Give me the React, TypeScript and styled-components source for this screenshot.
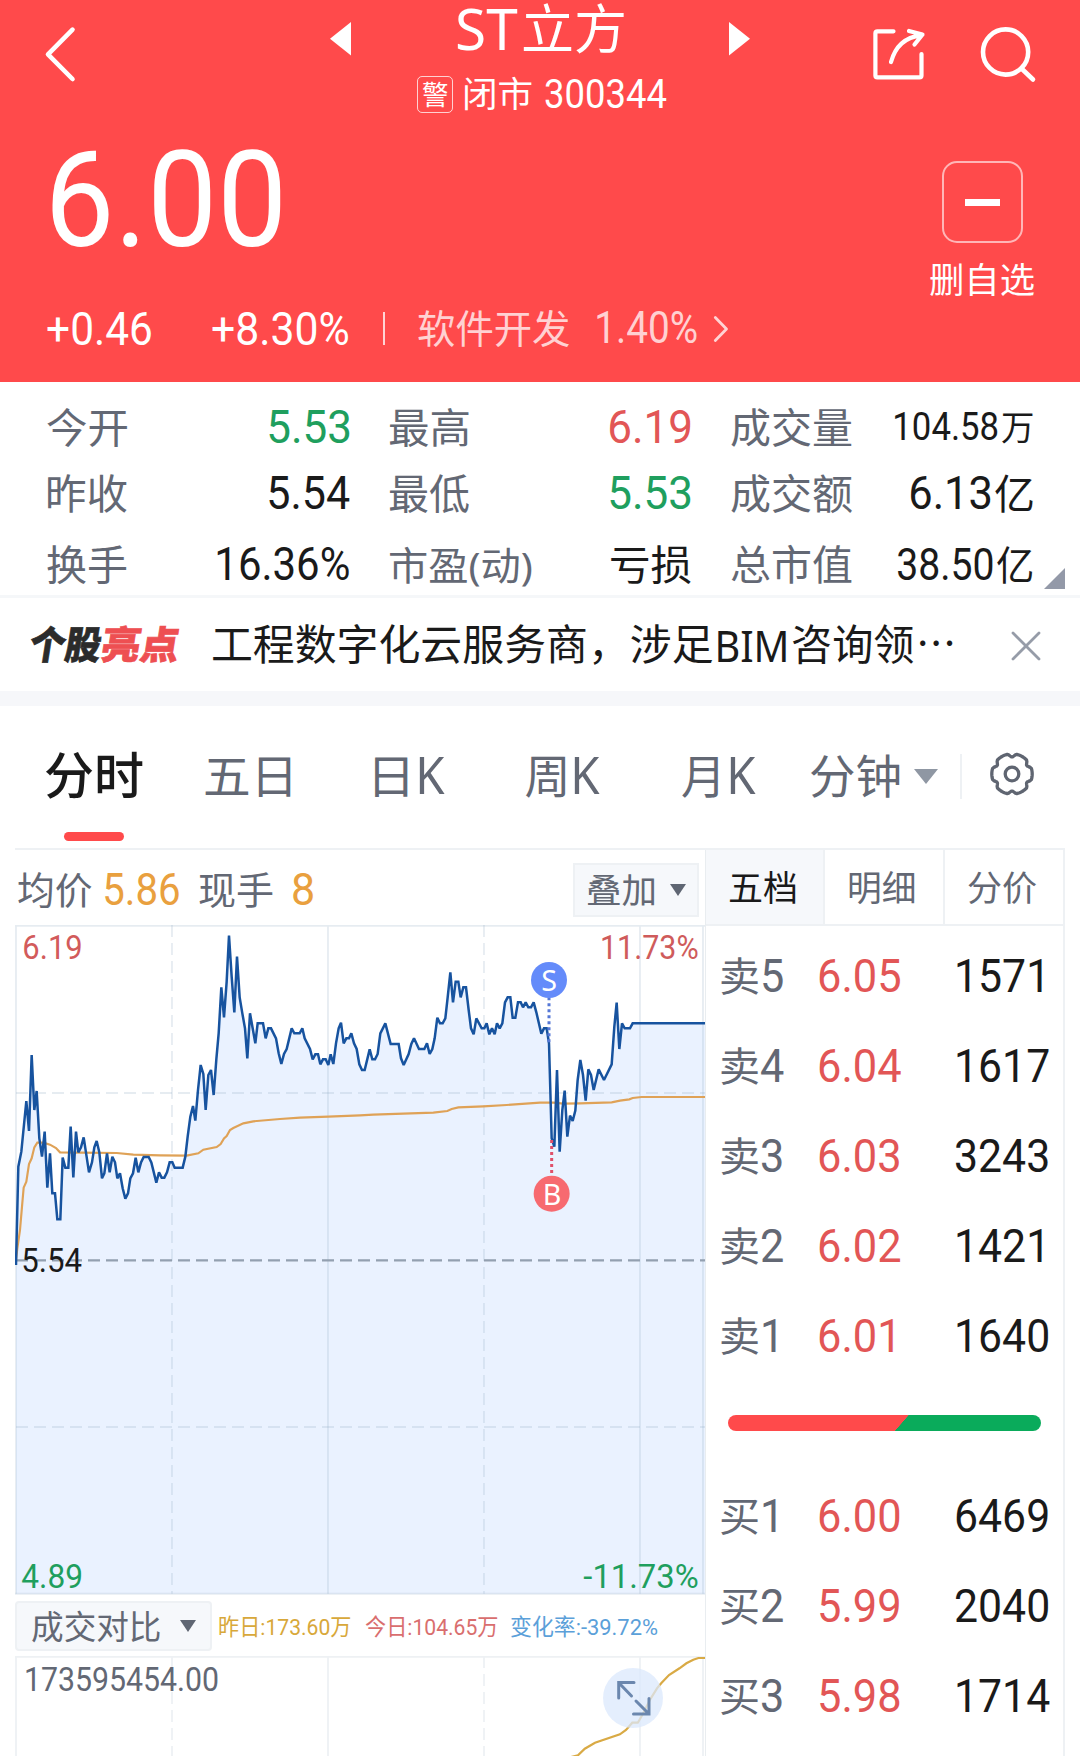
import React, { useLayoutEffect, useRef, useState } from "react";
import styled, { createGlobalStyle } from "styled-components";

const RED = "#ff4a4b";
const UP = "#e25656";
const DOWN = "#1f9f5e";
const INK = "#1a1a1a";
const GREY = "#636874";
const LINE = "#eef1f4";
const PANEL = "#f6f8fb";
const NUM_FONT = '"Roboto", "Noto Sans CJK SC", sans-serif';
const TEXT_FONT = '"Noto Sans", "Noto Sans CJK SC", sans-serif';

const GlobalStyle = createGlobalStyle`
  *, *::before, *::after { box-sizing: border-box; }
  html, body { margin: 0; padding: 0; background: #fff; }
  body { width: 1080px; height: 1756px; overflow: hidden; font-family: ${TEXT_FONT}; color: ${INK}; }
`;

/* ---------- text fitted to a fixed width ---------- */

const FitBox = styled.span<{ $w: number; $size: number; $color?: string; $weight?: number; $num?: boolean; $ml?: number; $dy?: number }>`
  display: inline-block;
  flex: none;
  width: ${(p) => p.$w}px;
  height: ${(p) => p.$size}px;
  margin-left: ${(p) => p.$ml ?? 0}px;
  margin-top: ${(p) => (p.$dy ?? 0) * 2}px;
  font-family: ${(p) => (p.$num ? NUM_FONT : TEXT_FONT)};
  font-size: ${(p) => p.$size}px;
  line-height: ${(p) => p.$size}px;
  font-weight: ${(p) => p.$weight ?? 400};
  color: ${(p) => p.$color ?? "inherit"};
  white-space: nowrap;
`;

const FitInner = styled.span`
  display: inline-block;
  transform-origin: 0 0;
`;

type FitProps = {
  w: number;
  size: number;
  children: string;
  color?: string;
  weight?: number;
  num?: boolean;
  ml?: number;
  dy?: number;
  advance?: boolean;
};

function Fit({ w, size, children, color, weight, num, ml, dy, advance }: FitProps) {
  const ref = useRef<HTMLSpanElement>(null);
  const [transform, setTransform] = useState("none");
  useLayoutEffect(() => {
    const el = ref.current;
    const ctx = document.createElement("canvas").getContext("2d");
    if (!el || !ctx) return;
    const cs = getComputedStyle(el);
    ctx.font = `${cs.fontWeight} ${cs.fontSize} ${cs.fontFamily}`;
    const m = ctx.measureText(children);
    const left = advance ? 0 : -m.actualBoundingBoxLeft;
    const width = advance ? m.width : m.actualBoundingBoxRight + m.actualBoundingBoxLeft;
    setTransform(`scaleX(${w / width}) translateX(${-left}px)`);
  }, [children, w, advance]);
  return (
    <FitBox $w={w} $size={size} $color={color} $weight={weight} $num={num} $ml={ml} $dy={dy}>
      <FitInner ref={ref} style={{ transform }}>
        {children}
      </FitInner>
    </FitBox>
  );
}

/* ---------- layout parts ---------- */

const Page = styled.main`
  width: 1080px;
  height: 1756px;
  background: #fff;
`;

const Icon = styled.svg<{ $ml?: number; $mt?: number }>`
  display: block;
  flex: none;
  overflow: visible;
  fill: none;
  stroke-linecap: round;
  stroke-linejoin: round;
  margin-left: ${(p) => p.$ml ?? 0}px;
  margin-top: ${(p) => p.$mt ?? 0}px;
`;

const Header = styled.header`
  height: 382px;
  background: ${RED};
  color: #fff;
`;

const TopBar = styled.div`
  display: flex;
  align-items: flex-start;
  height: 133px;
`;

const TitleBlock = styled.div`
  width: 250px;
  margin-left: 66px;
`;

const TitleRow = styled.div`
  display: flex;
  align-items: center;
  height: 57px;
  padding-left: 40px;
`;

const CodeRow = styled.div`
  display: flex;
  align-items: center;
  height: 75px;
`;

const Badge = styled.span`
  display: flex;
  align-items: center;
  justify-content: center;
  width: 36px;
  height: 37px;
  border: 1.5px solid rgba(255, 255, 255, 0.75);
  border-radius: 5px;
`;

const Quote = styled.div`
  display: flex;
  justify-content: space-between;
  padding: 0 46px 0 47px;
`;

const PriceRow = styled.div`
  display: flex;
  align-items: center;
  height: 131px;
  padding: 4px 0 0 5px;
`;

const ChangeRow = styled.div`
  display: flex;
  align-items: center;
  height: 108px;
  margin-top: 10px;
`;

const Divider = styled.span<{ $h: number; $ml: number; $color: string }>`
  flex: none;
  width: 2px;
  height: ${(p) => p.$h}px;
  margin-left: ${(p) => p.$ml}px;
  background: ${(p) => p.$color};
`;

const Watch = styled.div`
  display: flex;
  flex-direction: column;
  align-items: center;
  width: 104px;
  padding-top: 28px;
`;

const WatchButton = styled.button`
  display: flex;
  align-items: center;
  justify-content: center;
  width: 81px;
  height: 82px;
  margin-bottom: 19px;
  padding: 0;
  background: none;
  border: 2px solid rgba(255, 255, 255, 0.6);
  border-radius: 15px;
  &::before {
    content: "";
    width: 35px;
    height: 7px;
    background: #fff;
  }
`;

const Stats = styled.section`
  position: relative;
  height: 216px;
  padding: 12px 47px 0;
  border-bottom: 3px solid #f5f7f9;
`;

const StatRow = styled.div<{ $h: number; $mt?: number }>`
  display: grid;
  grid-template-columns: 302.6px 302.6px 302.4px;
  column-gap: 39.2px;
  height: ${(p) => p.$h}px;
  margin-top: ${(p) => p.$mt ?? 0}px;
`;

const StatCell = styled.div`
  display: flex;
  align-items: center;
  justify-content: space-between;
`;

const StatValue = styled.span`
  display: flex;
  align-items: center;
`;

const Corner = styled.span`
  position: absolute;
  right: 15px;
  bottom: 6px;
  border-style: solid;
  border-width: 0 0 21px 21px;
  border-color: transparent transparent #9399a8 transparent;
`;

const Highlight = styled.section`
  display: flex;
  align-items: center;
  height: 93px;
  padding-left: 30px;
`;

const Logo = styled.span`
  display: flex;
  width: 150px;
  transform: skewX(-9deg);
  -webkit-text-stroke: 0.7px currentColor;
`;

const Band = styled.div`
  height: 15px;
  background: #f6f7fa;
`;

const Tabs = styled.nav`
  display: flex;
  align-items: center;
  height: 142px;
  padding: 0 0 2px 45px;
  color: ${GREY};
`;

const Tab = styled.div<{ $ml?: number }>`
  position: relative;
  display: flex;
  align-items: center;
  margin-left: ${(p) => p.$ml ?? 0}px;
`;

const Underline = styled.span`
  position: absolute;
  left: 19px;
  top: 80px;
  width: 60px;
  height: 9px;
  border-radius: 5px;
  background: ${RED};
`;

const Caret = styled.span<{ $w: number; $h: number; $ml: number; $color: string }>`
  flex: none;
  width: 0;
  height: 0;
  margin-left: ${(p) => p.$ml}px;
  border-left: ${(p) => p.$w / 2}px solid transparent;
  border-right: ${(p) => p.$w / 2}px solid transparent;
  border-top: ${(p) => p.$h}px solid ${(p) => p.$color};
`;

const Board = styled.section`
  display: flex;
  width: 1050px;
  height: 908px;
  margin-left: 15px;
  border-top: 2px solid ${LINE};
  border-right: 2px solid ${LINE};
`;

const ChartCol = styled.div`
  width: 690px;
`;

const InfoRow = styled.div`
  display: flex;
  align-items: center;
  height: 75px;
  padding: 4px 6px 0 3px;
  color: ${GREY};
`;

const Select = styled.button<{ $w: number; $h: number; $pl: number; $radius?: number }>`
  display: flex;
  align-items: center;
  width: ${(p) => p.$w}px;
  height: ${(p) => p.$h}px;
  padding: 0 0 0 ${(p) => p.$pl}px;
  color: ${GREY};
  background: ${PANEL};
  border: 2px solid ${LINE};
  border-radius: ${(p) => p.$radius ?? 0}px;
`;

const Push = styled.div`
  margin-left: auto;
`;

const Plot = styled.svg`
  display: block;
  width: 690px;
`;

const VolumeRow = styled.div`
  display: flex;
  align-items: center;
  height: 60px;
`;

const BookCol = styled.div`
  flex: 1;
  border-left: 1px solid #e9edf0;
`;

const BookTabs = styled.div`
  display: grid;
  grid-template-columns: 116.5px 120.5px 1fr;
  height: 76px;
  border-bottom: 2px solid ${LINE};
`;

const BookTab = styled.div<{ $active?: boolean }>`
  display: flex;
  align-items: center;
  justify-content: center;
  padding: 1px 4px 0 0;
  color: ${(p) => (p.$active ? INK : GREY)};
  background: ${(p) => (p.$active ? PANEL : "#fff")};
  & + & {
    border-left: 2px solid ${LINE};
  }
`;

const Orders = styled.div`
  padding: 5px 13px 0 15px;
`;

const OrderRow = styled.div`
  display: flex;
  align-items: center;
  height: 90px;
`;

const Ratio = styled.div`
  display: flex;
  align-items: center;
  height: 90px;
  padding: 0 9px 7px 6.5px;
`;

const RatioBar = styled.div`
  width: 313px;
  height: 16px;
  border-radius: 8px;
  background: linear-gradient(131deg, ${RED} 0 55.2%, #0aab5b 55.4% 100%);
`;

/* ---------- data ---------- */

type Part = { t: string; w: number; size: number; num?: boolean; color?: string; ml?: number };
type Stat = { label: Part; value: Part[] };

const stats: Stat[][] = [
  [
    { label: { t: "今开", w: 80, size: 41 }, value: [{ t: "5.53", w: 81, size: 46.5, num: true, color: DOWN }] },
    { label: { t: "最高", w: 80, size: 41 }, value: [{ t: "6.19", w: 81, size: 46.5, num: true, color: UP }] },
    {
      label: { t: "成交量", w: 121, size: 41 },
      value: [
        { t: "104.58", w: 103, size: 39.5, num: true },
        { t: "万", w: 30.5, size: 34, ml: 4 },
      ],
    },
  ],
  [
    { label: { t: "昨收", w: 79, size: 41, ml: 1 }, value: [{ t: "5.54", w: 81, size: 46.5, num: true }] },
    { label: { t: "最低", w: 80, size: 41 }, value: [{ t: "5.53", w: 81, size: 46.5, num: true, color: DOWN }] },
    {
      label: { t: "成交额", w: 121, size: 41 },
      value: [
        { t: "6.13", w: 80, size: 46.5, num: true },
        { t: "亿", w: 38, size: 41, ml: 4 },
      ],
    },
  ],
  [
    { label: { t: "换手", w: 80, size: 41 }, value: [{ t: "16.36%", w: 132.5, size: 46.5, num: true }] },
    { label: { t: "市盈(动)", w: 143, size: 39 }, value: [{ t: "亏损", w: 80, size: 41 }] },
    {
      label: { t: "总市值", w: 121, size: 41 },
      value: [
        { t: "38.50", w: 95, size: 44, num: true },
        { t: "亿", w: 35.5, size: 40, ml: 4 },
      ],
    },
  ],
];

const sells = [
  ["卖", "5", "6.05", "1571"],
  ["卖", "4", "6.04", "1617"],
  ["卖", "3", "6.03", "3243"],
  ["卖", "2", "6.02", "1421"],
  ["卖", "1", "6.01", "1640"],
];
const buys = [
  ["买", "1", "6.00", "6469"],
  ["买", "2", "5.99", "2040"],
  ["买", "3", "5.98", "1714"],
];

/* Plot units are thirds of a pixel. */
const morning = [
  48, 1035, 55, 740, 64, 695, 79, 543, 87, 633, 95, 405, 103, 570, 110, 513, 118, 655, 126, 710, 134, 635, 142, 803,
  150, 700, 157, 820, 165, 820, 172, 898, 181, 898, 188, 713, 196, 743, 205, 743, 212, 620, 220, 772, 228, 635, 235,
  697, 243, 682, 251, 652, 267, 757, 276, 727, 283, 682, 290, 663, 298, 697, 306, 775, 313, 760, 321, 700, 329, 757,
  337, 710, 345, 727, 352, 775, 360, 760, 368, 805, 376, 836, 384, 820, 391, 775, 399, 760, 407, 713, 415, 757, 423,
  727, 431, 711, 446, 711, 454, 727, 469, 788, 477, 757, 485, 773, 493, 773, 501, 757, 509, 727, 517, 727, 524, 743,
  548, 743, 556, 710, 563, 650, 571, 590, 579, 558, 586, 602, 594, 510, 602, 435, 610, 462, 617, 570, 625, 465, 633,
  450, 641, 525, 649, 418, 656, 340, 664, 202, 672, 292, 680, 185, 687, 47, 695, 170, 703, 277, 711, 110, 719, 232,
  727, 280, 735, 325, 742, 415, 750, 280, 758, 325, 766, 370, 773, 310, 789, 310, 797, 355, 805, 325, 813, 325, 828,
  355, 836, 400, 844, 432, 852, 402, 860, 387, 875, 325, 883, 340, 899, 340, 907, 325, 914, 355, 930, 387, 938, 418,
  946, 403, 954, 403, 961, 433, 969, 418, 977, 418, 985, 435, 992, 403, 1000, 432, 1008, 370, 1016, 325,
];
const afternoon = [
  3, 308, 11, 370, 19, 355, 27, 355, 34, 340, 42, 370, 50, 387, 58, 433, 66, 450, 74, 450, 89, 388, 97, 418, 105, 418,
  113, 402, 121, 340, 136, 310, 152, 372, 176, 372, 183, 415, 191, 435, 206, 402, 214, 372, 222, 355, 237, 387, 253,
  387, 261, 370, 269, 402, 277, 387, 284, 355, 292, 293, 300, 310, 308, 310, 316, 295, 323, 232, 331, 157, 339, 247,
  347, 185, 355, 185, 362, 232, 370, 202, 378, 202, 386, 270, 393, 325, 401, 343, 409, 295, 425, 325, 433, 325, 440,
  310, 448, 343, 456, 325, 464, 343, 471, 310, 479, 325, 487, 310, 495, 247, 503, 232, 511, 232, 518, 293, 526, 293,
  534, 247, 542, 247, 549, 262, 557, 247, 565, 262, 573, 262, 581, 247, 589, 277, 604, 341, 612, 325, 620, 325, 627,
  370, 635, 655, 643, 680, 651, 450, 659, 695, 667, 570, 674, 512, 682, 650, 690, 587, 698, 603, 706, 572, 713, 480,
  721, 420, 729, 465, 737, 542, 745, 448, 753, 465, 761, 510, 776, 448, 792, 480, 815, 433, 823, 320, 830, 248, 838,
  387, 846, 310, 854, 325, 870, 325, 878, 310, 1095, 310,
];
const avgMorning = [
  48, 1020, 52, 985, 60, 930, 66, 860, 71, 803, 79, 785, 87, 732, 95, 715, 103, 682, 112, 668, 130, 668, 150, 674,
  168, 684, 180, 697, 240, 698, 350, 699, 400, 704, 480, 706, 560, 707, 595, 700, 610, 689, 650, 681, 662, 672, 672,
  655, 680, 648, 690, 630, 700, 624, 730, 610, 760, 604, 840, 597, 900, 593, 985, 590,
];
const avgAfternoon = [
  60, 586, 100, 584, 280, 578, 322, 573, 335, 567, 355, 562, 430, 559, 500, 555, 600, 548, 640, 548, 670, 551, 720,
  550, 815, 547, 840, 542, 868, 538, 878, 534, 905, 531, 1095, 531,
];

const toPoints = (first: number[], second: number[]) => {
  const out: string[] = [];
  for (let i = 0; i < first.length; i += 2) out.push(`${first[i]},${first[i + 1]}`);
  for (let i = 0; i < second.length; i += 2) out.push(`${second[i] + 1020},${second[i + 1]}`);
  return out.join(" ");
};

const pricePoints = toPoints(morning, afternoon);
const avgPoints = toPoints(avgMorning, avgAfternoon);

const gearPath = (() => {
  const pts: string[] = [];
  for (let a = 0; a < 360; a += 4) {
    const t = (a * Math.PI) / 180;
    const c = Math.max(0, Math.cos(6 * (t - Math.PI / 2)));
    const r = 20.2 - 3.2 * c * c;
    pts.push(`${(22 + r * Math.cos(t)).toFixed(2)} ${(22 + r * Math.sin(t)).toFixed(2)}`);
  }
  return `M${pts.join("L")}Z`;
})();

/* ---------- pieces ---------- */

const PartText = ({ p }: { p: Part }) => (
  <Fit w={p.w} size={p.size} num={p.num} color={p.color} ml={p.ml}>
    {p.t}
  </Fit>
);

const Order = ({ row }: { row: string[] }) => (
  <OrderRow>
    <Fit w={37} size={40} color={GREY}>{row[0]}</Fit>
    <Fit w={24.3} size={46.5} num advance color={GREY} ml={2}>{row[1]}</Fit>
    <Fit w={84.6} size={46.5} num advance color={UP} ml={33}>{row[2]}</Fit>
    <Push>
      <Fit w={96.2} size={46.5} num advance>{row[3]}</Fit>
    </Push>
  </OrderRow>
);

const numText = { fontFamily: NUM_FONT, fontSize: 101, lengthAdjust: "spacingAndGlyphs" as const };

const PriceChart = () => (
  <Plot viewBox="45 15 2070 2013" height={671}>
    <polygon points={`48,2021 ${pricePoints} 2115,2021`} fill="#eaf2ff" />
    <g stroke="rgba(150,175,195,0.24)" strokeWidth={5.5} fill="none">
      <path d="M45 17.5H2115M48 15V2021M984 15V2021M1920 15V2021M2109 15V2021" />
      <path d="M45 2021H2115" strokeWidth={6} />
      <path d="M516 15V2021M1452 15V2021" strokeDasharray="36 18" />
      <path d="M48 519H2115M48 1521H2115" strokeDasharray="36 18" />
    </g>
    <path d="M48 1021H2115" stroke="#93a0b0" strokeWidth={7} strokeDasharray="36 18" />
    <polyline points={avgPoints} fill="none" stroke="#dfa257" strokeWidth={6.5} />
    <polyline points={pricePoints} fill="none" stroke="#17539f" strokeWidth={7.5} strokeLinejoin="miter" strokeMiterlimit={2} />
    <path d="M1647 232V372" stroke="#5577d6" strokeWidth={9} strokeDasharray="9 9" />
    <path d="M1655 660V766" stroke="#e0506a" strokeWidth={9} strokeDasharray="9 9" />
    <circle cx={1647} cy={180} r={54} fill="#648bfa" />
    <circle cx={1655} cy={821} r={54} fill="#f76a70" />
    <g fill="#fff" fontFamily={TEXT_FONT} fontSize={86} textAnchor="middle">
      <text x={1647} y={214}>S</text>
      <text x={1656} y={854}>B</text>
    </g>
    <text x={67} y={118} textLength={181} fill="#d25b5b" {...numText}>6.19</text>
    <text x={1800} y={118} textLength={296} fill="#cf5b5b" {...numText}>11.73%</text>
    <text x={64} y={1056} textLength={182} fill={INK} {...numText}>5.54</text>
    <text x={64} y={2003} textLength={185} fill={DOWN} {...numText}>4.89</text>
    <text x={1750} y={2003} textLength={346} fill={DOWN} {...numText}>-11.73%</text>
  </Plot>
);

const VolumeChart = () => (
  <Plot viewBox="15 1656 690 100" height={100}>
    <g stroke={LINE} strokeWidth={1.8} fill="none">
      <path d="M15 1656.8H705M16 1656V1756M328 1656V1756M640 1656V1756M703 1656V1756" />
      <path d="M172 1656V1756M484 1656V1756" strokeDasharray="12 6" />
    </g>
    <polyline
      points="571,1757 578,1755.3 584.8,1748.7 595,1742.7 619.9,1734.3 626,1730 632.3,1722.7 637.8,1722.7 642.3,1715 650.2,1699.3 657,1688.3 661.2,1683.3 669,1675 679.5,1668.3 686.4,1663.3 693.3,1659.7 698.4,1658 705,1658"
      fill="none"
      stroke="#d9aa45"
      strokeWidth={2.2}
    />
    <circle cx={633} cy={1698} r={30} fill="#dbe8fc" fillOpacity={0.75} />
    <path
      d="M634 1682.5H618.7V1698M619.5 1683.5L631.5 1696M633.5 1714H649V1698.5M636 1701L648.5 1713.5"
      fill="none"
      stroke="#6b87ae"
      strokeWidth={3}
      strokeLinecap="round"
    />
    <text x={24} y={1690.5} textLength={195} fill={GREY} {...numText} fontSize={33.5}>173595454.00</text>
  </Plot>
);

export default function App() {
  const soft = "rgba(255,255,255,0.76)";
  return (
    <Page>
      <GlobalStyle />
      <Header>
        <TopBar>
          <Icon $ml={44.5} $mt={27} width={30} height={55} stroke="#fff" strokeWidth={4.6}>
            <path d="M27.5 2.7L3 27.3L27.5 52" />
          </Icon>
          <Icon $ml={255.5} $mt={22} width={21} height={34}>
            <path d="M21 0V33.5L0 16.7Z" fill="#fff" />
          </Icon>
          <TitleBlock>
            <TitleRow>
              <Fit w={61} size={57}>ST</Fit>
              <Fit w={101} size={53} ml={5} dy={-0.5}>立方</Fit>
            </TitleRow>
            <CodeRow>
              <Badge>
                <Fit w={25.5} size={27}>警</Fit>
              </Badge>
              <Fit w={67} size={35} ml={12} dy={-1}>闭市</Fit>
              <Fit w={122} size={41} num ml={12.5} dy={-0.5}>300344</Fit>
            </CodeRow>
          </TitleBlock>
          <Icon $ml={62} $mt={22} width={21} height={34}>
            <path d="M0 0V33.5L21 16.7Z" fill="#fff" />
          </Icon>
          <Icon $ml={122.7} $mt={28} width={52} height={52} stroke="#fff" strokeWidth={4.2}>
            <path d="M20.5 3.3H4.3Q2.4 3.3 2.4 5.2V47.5Q2.4 49.3 4.3 49.3H46.5Q48.5 49.3 48.5 47.5V26" />
            <path d="M18 34Q24.5 10 48 7.3M36 3L49.5 6.5L41.5 16.5" />
          </Icon>
          <Icon $ml={56.3} $mt={27} width={54} height={55} stroke="#fff" strokeWidth={4.6}>
            <circle cx={24.6} cy={25} r={22.6} />
            <path d="M41 42L52 52.5" />
          </Icon>
        </TopBar>
        <Quote>
          <div>
            <PriceRow>
              <Fit w={228.5} size={134} num>6.00</Fit>
            </PriceRow>
            <ChangeRow>
              <Fit w={104.5} size={47} num>+0.46</Fit>
              <Fit w={136.5} size={47} num ml={60.5}>+8.30%</Fit>
              <Divider $h={33} $ml={34} $color={soft} />
              <Fit w={152} size={38.5} ml={33} dy={0.5} color={soft}>软件开发</Fit>
              <Fit w={99.5} size={43.5} num ml={27.5} dy={1} color={soft}>1.40%</Fit>
              <Icon $ml={17.5} $mt={2} width={14} height={26} stroke={soft} strokeWidth={2.8}>
                <path d="M1.3 1.5L12.5 13L1.3 24.5" />
              </Icon>
            </ChangeRow>
          </div>
          <Watch>
            <WatchButton />
            <Fit w={104} size={35}>删自选</Fit>
          </Watch>
        </Quote>
      </Header>

      <Stats>
        {stats.map((row, i) => (
          <StatRow key={i} $h={i === 2 ? 61 : 66} $mt={i === 2 ? 8 : 0}>
            {row.map((s) => (
              <StatCell key={s.label.t}>
                <PartText p={{ ...s.label, color: GREY }} />
                <StatValue>
                  {s.value.map((v) => (
                    <PartText key={v.t} p={v} />
                  ))}
                </StatValue>
              </StatCell>
            ))}
          </StatRow>
        ))}
        <Corner />
      </Stats>

      <Highlight>
        <Logo>
          <Fit w={71} size={38.5} weight={900} color="#2b2b2b">个股</Fit>
          <Fit w={76} size={38.5} weight={900} color="#ee4f52" ml={2}>亮点</Fit>
        </Logo>
        <Fit w={499} size={41.5} ml={32.5} dy={0.5}>工程数字化云服务商，涉足</Fit>
        <Fit w={68} size={44} ml={6}>BIM</Fit>
        <Fit w={121} size={41.5} ml={7} dy={0.5}>咨询领</Fit>
        <Fit w={33} size={41.5} ml={6} num>⋯</Fit>
        <Icon $ml={59} $mt={2} width={28} height={28} stroke="#969ca8" strokeWidth={2.8}>
          <path d="M1 1L27 27M27 1L1 27" />
        </Icon>
      </Highlight>
      <Band />

      <Tabs>
        <Tab>
          <Fit w={98} size={50} weight={500} color={INK} dy={-1}>分时</Fit>
          <Underline />
        </Tab>
        <Tab $ml={62}>
          <Fit w={86} size={46} dy={-1.5}>五日</Fit>
        </Tab>
        <Tab $ml={83.7}>
          <Fit w={33} size={46} dy={-1.5}>日</Fit>
          <Fit w={26} size={51} ml={11.3} dy={-1.5}>K</Fit>
        </Tab>
        <Tab $ml={80.5}>
          <Fit w={40} size={46} dy={-1.5}>周</Fit>
          <Fit w={26} size={51} ml={9} dy={-1.5}>K</Fit>
        </Tab>
        <Tab $ml={82}>
          <Fit w={36} size={46} dy={-1.5}>月</Fit>
          <Fit w={26} size={51} ml={11.3} dy={-1.5}>K</Fit>
        </Tab>
        <Tab $ml={55}>
          <Fit w={89} size={46} dy={-1.5}>分钟</Fit>
          <Caret $w={25} $h={15} $ml={14} $color="#8f97a3" />
        </Tab>
        <Divider $h={45} $ml={22.5} $color={LINE} />
        <Icon $ml={27.3} $mt={-4} width={44} height={44} stroke="#5f6571" strokeWidth={3.3}>
          <path d={gearPath} />
          <circle cx={22} cy={22} r={6.8} />
        </Icon>
      </Tabs>

      <Board>
        <ChartCol>
          <InfoRow>
            <Fit w={74} size={37.5}>均价</Fit>
            <Fit w={74} size={44} num color="#e9a03e" ml={12.5}>5.86</Fit>
            <Fit w={73.5} size={37.5} ml={20.5}>现手</Fit>
            <Fit w={20.5} size={44} num color="#e9a03e" ml={20.5}>8</Fit>
            <Push>
              <Select $w={126} $h={54} $pl={11.5}>
                <Fit w={67.5} size={34.5} dy={0.5}>叠加</Fit>
                <Caret $w={17} $h={12.5} $ml={15.5} $color="#5f6673" />
              </Select>
            </Push>
          </InfoRow>
          <PriceChart />
          <VolumeRow>
            <Select $w={197} $h={50} $pl={14.5} $radius={4}>
              <Fit w={128.5} size={33}>成交对比</Fit>
              <Caret $w={17} $h={12} $ml={19.5} $color="#5f6673" />
            </Select>
            <Fit w={132} size={22.5} num color="#d8a83a" ml={7} dy={1.5}>昨日:173.60万</Fit>
            <Fit w={133} size={22.5} num color="#d96e6e" ml={13.5} dy={1.5}>今日:104.65万</Fit>
            <Fit w={146.5} size={22.5} num color="#5ba0d9" ml={13} dy={1.5}>变化率:-39.72%</Fit>
          </VolumeRow>
          <VolumeChart />
        </ChartCol>

        <BookCol>
          <BookTabs>
            <BookTab $active>
              <Fit w={67} size={35}>五档</Fit>
            </BookTab>
            <BookTab>
              <Fit w={65.5} size={35}>明细</Fit>
            </BookTab>
            <BookTab>
              <Fit w={68} size={35}>分价</Fit>
            </BookTab>
          </BookTabs>
          <Orders>
            {sells.map((r) => (
              <Order key={r[2]} row={r} />
            ))}
            <Ratio>
              <RatioBar />
            </Ratio>
            {buys.map((r) => (
              <Order key={r[2]} row={r} />
            ))}
          </Orders>
        </BookCol>
      </Board>
    </Page>
  );
}
